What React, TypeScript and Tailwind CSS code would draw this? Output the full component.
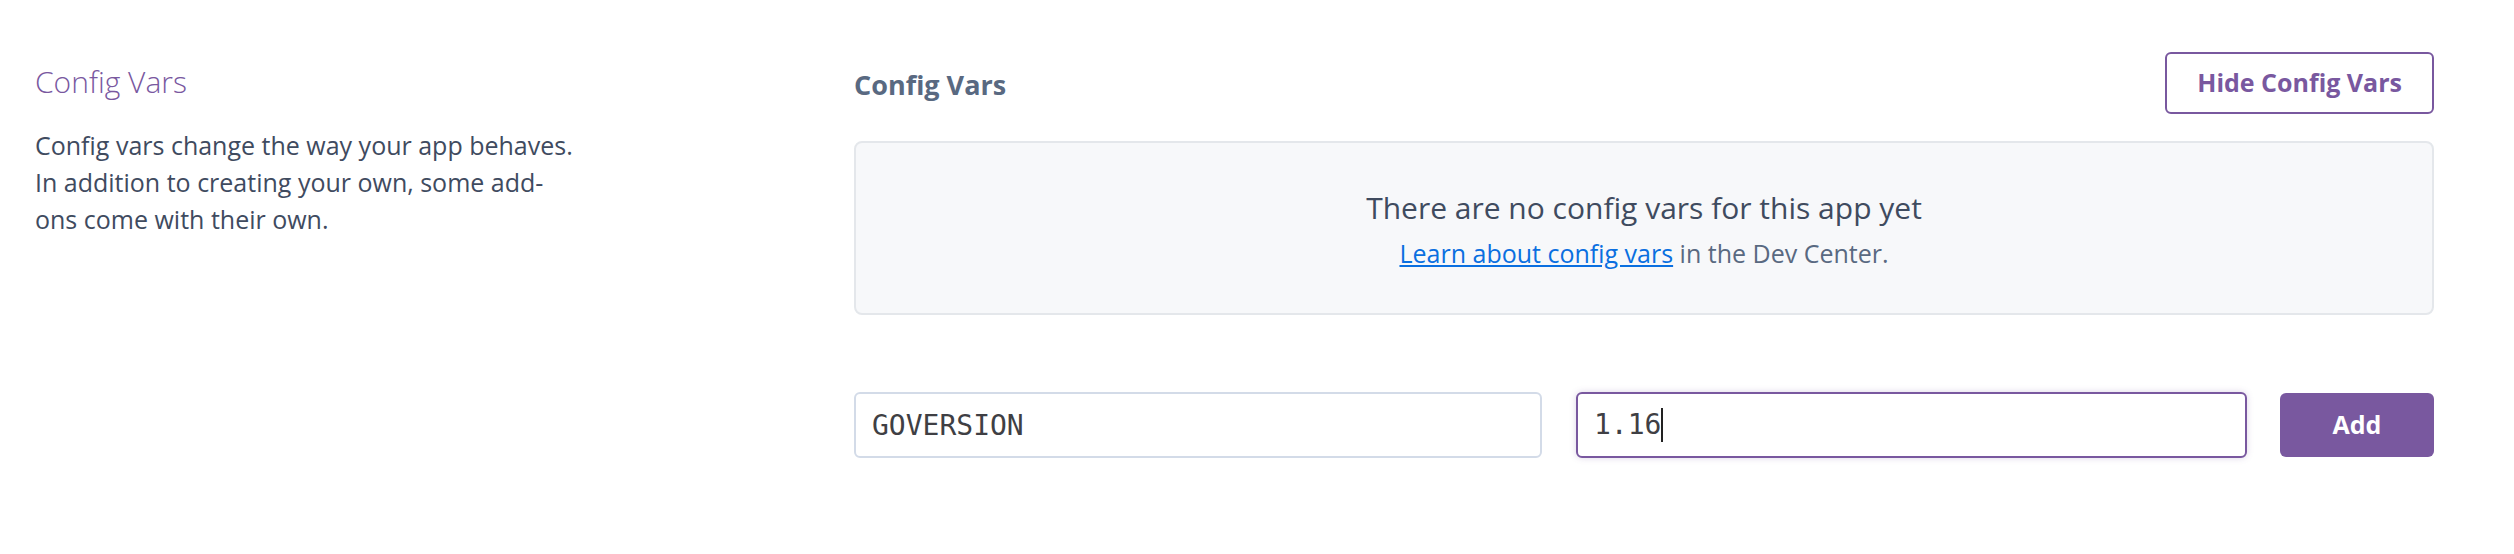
import React from "react";

export default function App() {
  return (
    <div
      className="w-full min-h-[554px] bg-white flex pl-[35px] pr-[80px] pt-[52px]"
      style={{ fontFamily: "'Open Sans', Lato, sans-serif" }}
    >
      {/* Left description column */}
      <div className="w-[819px] shrink-0 pt-[10px]">
        <h2 className="text-[30px] leading-[40px] font-light text-[#79589f]">Config Vars</h2>
        <p className="mt-[25px] w-[541px] text-[25px] leading-[37px] text-[#3f4b5f]">
          Config vars change the way your app behaves. In addition to creating your own, some add-ons come with their own.
        </p>
      </div>

      {/* Right content */}
      <div className="flex-1 flex flex-col">
        <div className="flex items-center justify-between h-[62px]">
          <h3 className="pt-[4px] text-[27px] font-bold text-[#596981]">Config Vars</h3>
          <button className="h-[62px] px-[30px] rounded-[6px] border-2 border-[#79589f] text-[#79589f] text-[25px] font-bold bg-white">
            Hide Config Vars
          </button>
        </div>

        <div className="mt-[27px] h-[174px] rounded-[8px] border-2 border-[#e4e7eb] bg-[#f7f8fa] flex flex-col items-center justify-center">
          <p className="text-[30px] leading-[40px] text-[#3f4b5f]">There are no config vars for this app yet</p>
          <p className="mt-[9px] text-[25px] leading-[32px] text-[#596981]">
            <a href="#" className="text-[#0a6fe0] underline">Learn about config vars</a> in the Dev Center.
          </p>
        </div>

        <div className="mt-[77px] flex items-center">
          <input
            readOnly
            value="GOVERSION"
            className="w-[688px] h-[66px] px-[16px] rounded-[6px] border-2 border-[#d3dbe8] bg-white text-[28px] text-[#3f3f44] outline-none"
            style={{ fontFamily: "'DejaVu Sans Mono', monospace" }}
          />
          <div className="flex-1 ml-[34px] h-[66px] px-[16px] rounded-[6px] border-2 border-[#79589f] bg-white shadow-[0_0_6px_rgba(121,88,159,0.25)] flex items-center">
            <span
              className="text-[28px] text-[#3f3f44]"
              style={{ fontFamily: "'DejaVu Sans Mono', monospace" }}
            >
              1.16
            </span>
            <span className="w-[2px] h-[34px] bg-[#222]"></span>
          </div>
          <button className="ml-[33px] w-[154px] h-[64px] rounded-[6px] bg-[#79589f] text-white text-[25px] font-bold">
            Add
          </button>
        </div>
      </div>
    </div>
  );
}
